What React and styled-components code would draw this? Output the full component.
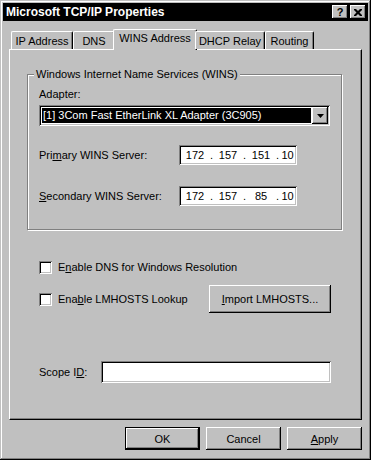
import React from 'react';
import styled, { createGlobalStyle, css } from 'styled-components';

const GlobalStyle = createGlobalStyle`
  html, body {
    margin: 0;
    padding: 0;
    background: #c0c0c0;
  }
  * {
    box-sizing: border-box;
  }
`;

const raised = css`
  box-shadow: inset -1px -1px #000, inset 1px 1px #fff, inset -2px -2px #808080;
`;

const sunken = css`
  box-shadow: inset 1px 1px #808080, inset -1px -1px #fff, inset 2px 2px #000, inset -2px -2px #c0c0c0;
`;

const Window = styled.div`
  width: 371px;
  height: 460px;
  background: #c0c0c0;
  padding: 3px;
  display: flex;
  flex-direction: column;
  box-shadow: inset -1px -1px #000, inset 1px 1px #c0c0c0, inset -2px -2px #808080, inset 2px 2px #fff;
  font-family: "Liberation Sans", Arial, sans-serif;
  font-size: 11px;
  color: #000;
`;

const TitleBar = styled.div`
  height: 18px;
  background: #000;
  color: #fff;
  display: flex;
  align-items: center;
  padding: 0 2px 0 3px;
  font-weight: bold;
  font-size: 12px;
`;

const TitleText = styled.span`
  flex: 1;
`;

const TitleButton = styled.div`
  width: 16px;
  height: 14px;
  background: #c0c0c0;
  color: #000;
  display: flex;
  align-items: center;
  justify-content: center;
  font-weight: bold;
  font-size: 11px;
  margin-left: ${(p) => (p.$gap ? '2px' : '0')};
  ${raised}
`;

const Body = styled.div`
  flex: 1;
  display: flex;
  flex-direction: column;
  padding: 8px 6px 7px 6px;
`;

const TabRow = styled.div`
  display: flex;
  align-items: flex-end;
  height: 20px;
  padding-left: 2px;
  position: relative;
  z-index: 1;
`;

const Tab = styled.div`
  width: ${(p) => p.$w}px;
  height: ${(p) => (p.$active ? 21 : 18)}px;
  margin: ${(p) => (p.$active ? '0 -2px -1px -2px' : '0')};
  padding-top: ${(p) => (p.$active ? 2 : 3)}px;
  text-align: center;
  background: #c0c0c0;
  border-top: 1px solid #fff;
  border-left: 1px solid #fff;
  border-right: 1px solid #000;
  border-radius: 2px 2px 0 0;
  box-shadow: inset -1px 0 #808080;
  white-space: nowrap;
`;

const Panel = styled.div`
  height: 371px;
  border-top: 1px solid #fff;
  border-left: 1px solid #fff;
  border-right: 1px solid #000;
  border-bottom: 1px solid #000;
  box-shadow: inset -1px -1px #808080;
  padding: 18px 0 0 0;
  display: flex;
  flex-direction: column;
`;

const GroupBox = styled.fieldset`
  margin: 0 0 0 17px;
  width: 315px;
  min-width: 0;
  border: 1px solid #808080;
  box-shadow: inset 1px 1px #fff, 1px 1px 0 #fff;
  padding: 7px 11px 23px 11px;
  display: flex;
  flex-direction: column;
`;

const Legend = styled.legend`
  padding: 0 2px;
  margin-left: -5px;
  background: #c0c0c0;
  line-height: 13px;
`;

const Label = styled.div`
  line-height: 13px;
  white-space: nowrap;
`;

const Key = styled.span`
  text-decoration: underline;
`;

const Combo = styled.div`
  margin-top: 4px;
  width: 291px;
  height: 21px;
  padding: 2px;
  background: #fff;
  display: flex;
  ${sunken}
`;

const ComboValue = styled.div`
  flex: 1;
  margin: 1px;
  background: #000;
  color: #fff;
  padding-left: 1px;
  line-height: 15px;
  white-space: nowrap;
  overflow: hidden;
`;

const ComboButton = styled.div`
  width: 16px;
  height: 17px;
  background: #c0c0c0;
  display: flex;
  align-items: center;
  justify-content: center;
  ${raised}
`;

const FieldRow = styled.div`
  display: flex;
  align-items: center;
  margin-top: ${(p) => p.$top}px;
`;

const FieldLabel = styled(Label)`
  width: 140px;
`;

const IpBox = styled.div`
  width: 118px;
  height: 20px;
  background: #fff;
  padding: 2px;
  display: flex;
  align-items: center;
  line-height: 14px;
  ${sunken}
`;

const IpPart = styled.span`
  width: ${(p) => (p.$last ? 'auto' : '28px')};
  flex: ${(p) => (p.$last ? 1 : 'none')};
  text-align: center;
`;

const IpDot = styled.span`
  width: 5px;
  text-align: center;
`;

const Options = styled.div`
  margin: 0 30px 0 29px;
  display: flex;
  flex-direction: column;
`;

const OptionRow = styled.div`
  display: flex;
  align-items: center;
  margin-top: ${(p) => p.$top}px;
  min-height: ${(p) => p.$h || 13}px;
`;

const CheckBox = styled.div`
  width: 13px;
  height: 13px;
  background: #fff;
  margin-right: 6px;
  flex: none;
  ${sunken}
`;

const Button = styled.div`
  width: ${(p) => p.$w || 75}px;
  height: ${(p) => p.$h || 23}px;
  background: #c0c0c0;
  display: flex;
  align-items: center;
  justify-content: center;
  margin-left: ${(p) => (p.$push ? 'auto' : '0')};
  ${(p) =>
    p.$default
      ? css`
          border: 1px solid #000;
          box-shadow: inset -1px -1px #000, inset 1px 1px #fff, inset -2px -2px #808080;
        `
      : raised}
`;

const TextBox = styled.div`
  width: 230px;
  height: 22px;
  background: #fff;
  margin-left: auto;
  ${sunken}
`;

const ButtonRow = styled.div`
  display: flex;
  justify-content: flex-end;
  gap: 6px;
  margin-top: 7px;
`;

const tabs = [
  { label: 'IP Address', w: 62 },
  { label: 'DNS', w: 42 },
  { label: 'WINS Address', w: 84, active: true },
  { label: 'DHCP Relay', w: 70 },
  { label: 'Routing', w: 49 },
];

function IpAddress({ parts }) {
  return (
    <IpBox>
      {parts.map((p, i) => (
        <React.Fragment key={i}>
          <IpPart $last={i === parts.length - 1}>{p}</IpPart>
          {i < parts.length - 1 && <IpDot>.</IpDot>}
        </React.Fragment>
      ))}
    </IpBox>
  );
}

export default function App() {
  return (
    <>
      <GlobalStyle />
      <Window>
        <TitleBar>
          <TitleText>Microsoft TCP/IP Properties</TitleText>
          <TitleButton>?</TitleButton>
          <TitleButton $gap>
            <svg width="8" height="7" viewBox="0 0 8 7">
              <path d="M0 0h2l2 2 2-2h2v1L5.5 3.5 8 6v1H6L4 5 2 7H0V6l2.5-2.5L0 1z" fill="#000" />
            </svg>
          </TitleButton>
        </TitleBar>
        <Body>
          <TabRow>
            {tabs.map((t) => (
              <Tab key={t.label} $w={t.w} $active={t.active}>
                {t.label}
              </Tab>
            ))}
          </TabRow>
          <Panel>
            <GroupBox>
              <Legend>Windows Internet Name Services (WINS)</Legend>
              <Label>Adapter:</Label>
              <Combo>
                <ComboValue>[1] 3Com Fast EtherLink XL Adapter (3C905)</ComboValue>
                <ComboButton>
                  <svg width="7" height="4" viewBox="0 0 7 4">
                    <path d="M0 0h7L3.5 4z" fill="#000" />
                  </svg>
                </ComboButton>
              </Combo>
              <FieldRow $top={19}>
                <FieldLabel>
                  Pri<Key>m</Key>ary WINS Server:
                </FieldLabel>
                <IpAddress parts={['172', '157', '151', '10']} />
              </FieldRow>
              <FieldRow $top={21}>
                <FieldLabel>
                  <Key>S</Key>econdary WINS Server:
                </FieldLabel>
                <IpAddress parts={['172', '157', '85', '10']} />
              </FieldRow>
            </GroupBox>
            <Options>
              <OptionRow $top={31}>
                <CheckBox />
                <Label>
                  E<Key>n</Key>able DNS for Windows Resolution
                </Label>
              </OptionRow>
              <OptionRow $top={11} $h={28}>
                <CheckBox />
                <Label>
                  Ena<Key>b</Key>le LMHOSTS Lookup
                </Label>
                <Button $w={122} $h={28} $push>
                  <span>
                    <Key>I</Key>mport LMHOSTS...
                  </span>
                </Button>
              </OptionRow>
              <OptionRow $top={48} $h={22}>
                <Label>
                  Scope I<Key>D</Key>:
                </Label>
                <TextBox />
              </OptionRow>
            </Options>
          </Panel>
          <ButtonRow>
            <Button $default>OK</Button>
            <Button>Cancel</Button>
            <Button>
              <span>
                <Key>A</Key>pply
              </span>
            </Button>
          </ButtonRow>
        </Body>
      </Window>
    </>
  );
}
